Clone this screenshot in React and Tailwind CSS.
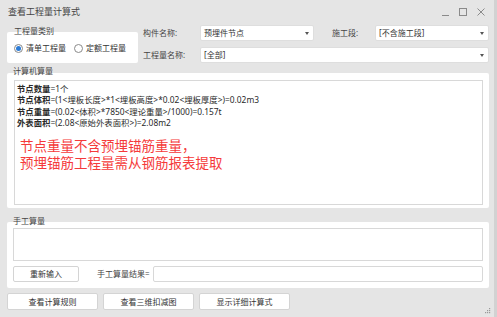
const font = { fontFamily: '"Noto Sans", "Noto Sans CJK SC", sans-serif' }

function Dropdown({ value, className = '' }) {
  return (
    <div className={`flex items-center justify-between rounded-[2px] border border-[#dedede] bg-white pl-[3px] pr-[4px] text-[8px] text-[#333] ${className}`}>
      <span>{value}</span>
      <svg width="4" height="3" viewBox="0 0 4 3">
        <path d="M0 0h4L2 3z" fill="#555" />
      </svg>
    </div>
  )
}

function Radio({ checked, label }) {
  return (
    <label className="flex items-center gap-[3px] text-[8px] text-[#333]">
      <span className="flex h-[9px] w-[9px] items-center justify-center rounded-full border border-[#8a8a8a] bg-white">
        {checked && <span className="h-[5px] w-[5px] rounded-full bg-[#2b7bd6]" />}
      </span>
      {label}
    </label>
  )
}

function Button({ children, className = '' }) {
  return (
    <button className={`flex items-center justify-center rounded-[2px] border border-[#d4d4d4] bg-white text-[8px] text-[#333] ${className}`}>
      {children}
    </button>
  )
}

function Line({ head, rest }) {
  return (
    <div>
      <span className="font-bold">{head}</span>
      {rest}
    </div>
  )
}

export default function App() {
  return (
    <div className="relative h-[317px] w-[497px] overflow-hidden border-r-[3px] border-[#d2d2d2] bg-[#e5e5e5]" style={font}>
      {/* title bar */}
      <div className="flex h-[24px] items-center justify-between pl-[8px] pr-[9px]">
        <span className="text-[9px] text-[#444]">查看工程量计算式</span>
        <div className="flex items-center gap-[10px] text-[#888]">
          <svg width="7" height="7" viewBox="0 0 7 7"><path d="M0 6.5h7" stroke="#8a8a8a" strokeWidth="1" /></svg>
          <svg width="8" height="8" viewBox="0 0 8 8"><rect x="0.5" y="0.5" width="7" height="7" fill="none" stroke="#8a8a8a" /></svg>
          <svg width="8" height="8" viewBox="0 0 8 8"><path d="M0.5 0.5l7 7M7.5 0.5l-7 7" stroke="#8a8a8a" /></svg>
        </div>
      </div>

      {/* top section */}
      <div className="flex pl-[7px]">
        <div className="flex w-[131px] flex-col pt-[2px]">
          <span className="relative z-10 mb-[-4px] pl-[7px] text-[8px] leading-[10px] text-[#444]">工程量类别</span>
          <div className="flex h-[31px] items-center gap-[8px] rounded-[2px] bg-white pl-[7px] pt-[1px]">
            <Radio checked label="清单工程量" />
            <Radio label="定额工程量" />
          </div>
        </div>
        <div className="ml-[5px] flex flex-col gap-[6px] pt-[1px]">
          <div className="flex h-[16px] items-center">
            <span className="w-[57px] text-[8px] text-[#444]">构件名称:</span>
            <Dropdown value="预埋件节点" className="h-[16px] w-[114px]" />
            <span className="ml-[18px] w-[43px] text-[8px] text-[#444]">施工段:</span>
            <Dropdown value="[不含施工段]" className="h-[16px] w-[114px]" />
          </div>
          <div className="flex h-[16px] items-center">
            <span className="w-[57px] text-[8px] text-[#444]">工程量名称:</span>
            <Dropdown value="[全部]" className="h-[16px] w-[289px]" />
          </div>
        </div>
      </div>

      {/* computer calc */}
      <div className="mt-[3px] flex flex-col pl-[7px] pr-[5px]">
        <span className="relative z-10 mb-[-3px] pl-[6px] text-[8px] leading-[10px] text-[#444]">计算机算量</span>
        <div className="h-[135px] rounded-[2px] bg-white pb-[3px] pl-[7px] pr-[6px] pt-[7px]">
          <div className="h-full border border-[#d8d8d8] pl-[2px] pt-[2px]">
            <div className="text-[8.4px] leading-[11.3px] text-[#2a2a2a]">
              <Line head="节点数量" rest="=1个" />
              <Line head="节点体积" rest="=(1<埋板长度>*1<埋板高度>*0.02<埋板厚度>)=0.02m3" />
              <Line head="节点重量" rest="=(0.02<体积>*7850<理论重量>/1000)=0.157t" />
              <Line head="外表面积" rest="=(2.08<原始外表面积>)=2.08m2" />
            </div>
            <div className="mt-[10px] pl-[3px] text-[13.5px] leading-[17px] text-[#f53a3a]">
              <div>节点重量不含预埋锚筋重量，</div>
              <div>预埋锚筋工程量需从钢筋报表提取</div>
            </div>
          </div>
        </div>
      </div>

      {/* manual calc */}
      <div className="mt-[8px] flex flex-col pl-[7px] pr-[5px]">
        <span className="relative z-10 mb-[-4px] pl-[6px] text-[8px] leading-[10px] text-[#444]">手工算量</span>
        <div className="flex h-[66px] flex-col gap-[5px] rounded-[2px] bg-white px-[6px] pt-[6px]">
          <div className="h-[33px] border border-[#d8d8d8]" />
          <div className="flex h-[16px] items-center">
            <Button className="h-[16px] w-[66px]">重新输入</Button>
            <span className="ml-[18px] w-[56px] text-[8px] text-[#444]">手工算量结果=</span>
            <div className="h-[16px] flex-1 rounded-[2px] border border-[#d8d8d8]" />
          </div>
        </div>
      </div>

      {/* bottom buttons */}
      <div className="mt-[5px] flex gap-[5px] pl-[7px]">
        <Button className="h-[17px] w-[91px]">查看计算规则</Button>
        <Button className="h-[17px] w-[91px]">查看三维扣减图</Button>
        <Button className="h-[17px] w-[91px]">显示详细计算式</Button>
      </div>

      <svg className="absolute bottom-[3px] right-[3px]" width="6" height="6" viewBox="0 0 6 6">
        <rect x="4" y="0" width="1.2" height="1.2" fill="#999" />
        <rect x="2" y="2" width="1.2" height="1.2" fill="#999" />
        <rect x="4" y="2" width="1.2" height="1.2" fill="#999" />
        <rect x="0" y="4" width="1.2" height="1.2" fill="#999" />
        <rect x="2" y="4" width="1.2" height="1.2" fill="#999" />
        <rect x="4" y="4" width="1.2" height="1.2" fill="#999" />
      </svg>
    </div>
  )
}
